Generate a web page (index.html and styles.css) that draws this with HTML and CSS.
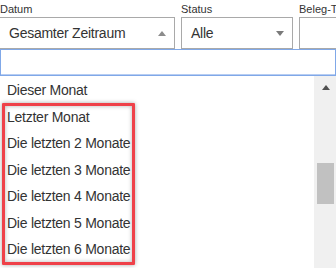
FILE: index.html
```html
<!DOCTYPE html>
<html lang="de">
<head>
<meta charset="utf-8">
<link rel="stylesheet" href="styles.css">
</head>
<body>
<div class="page">
  <div class="filters">
    <div class="field field-datum">
      <div class="label">Datum</div>
      <div class="select">
        <span class="value">Gesamter Zeitraum</span>
        <span class="arrow arrow-up"></span>
      </div>
    </div>
    <div class="field field-status">
      <div class="label">Status</div>
      <div class="select">
        <span class="value">Alle</span>
        <span class="arrow arrow-down"></span>
      </div>
    </div>
    <div class="field field-beleg">
      <div class="label">Beleg-Typ</div>
      <div class="select"></div>
    </div>
  </div>
  <div class="dropdown">
    <input class="search" type="text" aria-label="Suche">
    <div class="results">
      <ul class="options">
        <li>Dieser Monat</li>
        <li>Letzter Monat</li>
        <li>Die letzten 2 Monate</li>
        <li>Die letzten 3 Monate</li>
        <li>Die letzten 4 Monate</li>
        <li>Die letzten 5 Monate</li>
        <li>Die letzten 6 Monate</li>
      </ul>
      <div class="scrollbar">
        <span class="sb-arrow"></span>
        <span class="sb-thumb"></span>
      </div>
    </div>
  </div>
  <div class="highlight"></div>
</div>
</body>
</html>
```

FILE: styles.css
```css
html, body {
  margin: 0;
  padding: 0;
  background: #ffffff;
  overflow: hidden;
}
body {
  width: 336px;
  height: 268px;
  font-family: "Liberation Sans", Arial, sans-serif;
  color: #333333;
}
.page {
  position: relative;
  width: 336px;
  height: 268px;
  overflow: hidden;
}
.filters {
  display: flex;
  gap: 6px;
  margin-left: -1px;
  width: 360px;
}
.field {
  display: flex;
  flex-direction: column;
}
.field-datum { width: 176px; }
.field-status { width: 112px; }
.field-beleg { width: 60px; }
.label {
  height: 17px;
  font-size: 11px;
  line-height: 15px;
  padding-top: 2px;
  box-sizing: border-box;
  color: #333333;
}
.field-datum .label { padding-left: 1px; }
.select {
  box-sizing: border-box;
  height: 32px;
  border: 1px solid #a9a9a9;
  display: flex;
  align-items: center;
  justify-content: space-between;
  padding: 0 8px 0 9px;
}
.value {
  font-size: 14px;
  letter-spacing: -0.25px;
  color: #333333;
  line-height: 16px;
}
.arrow {
  width: 0;
  height: 0;
  border-left: 4px solid transparent;
  border-right: 4px solid transparent;
}
.arrow-up {
  border-bottom: 5px solid #8c8c8c;
}
.arrow-down {
  border-top: 5px solid #7a7a7a;
}
.dropdown {
  display: flex;
  flex-direction: column;
  height: 219px;
}
.search {
  display: block;
  box-sizing: border-box;
  width: 336px;
  height: 27px;
  margin: 0;
  border: 1px solid #80a8e8;
  box-shadow: inset 0 -1px 0 #b7cdf2;
  background: #ffffff;
  outline: none;
  padding: 0 6px;
  font-family: inherit;
  font-size: 14px;
}
.results {
  flex: 1;
  display: flex;
  min-height: 0;
}
.options {
  flex: 1;
  list-style: none;
  margin: 0;
  padding: 1px 0 0 0;
}
.options li {
  height: 26.5px;
  line-height: 26.5px;
  padding-left: 7px;
  font-size: 14px;
  letter-spacing: -0.25px;
  color: #333333;
  white-space: nowrap;
}
.scrollbar {
  width: 22px;
  background: #f0f0f0;
  display: flex;
  flex-direction: column;
  align-items: center;
  padding-left: 1px;
  box-sizing: border-box;
}
.sb-arrow {
  margin-top: 9px;
  width: 0;
  height: 0;
  border-left: 4.5px solid transparent;
  border-right: 4.5px solid transparent;
  border-bottom: 5px solid #505050;
}
.sb-thumb {
  margin-top: 73px;
  width: 17px;
  height: 41px;
  background: #c1c1c1;
}
.highlight {
  position: absolute;
  left: 2px;
  top: 103px;
  width: 133px;
  height: 162px;
  box-sizing: border-box;
  border: 3px solid #ef4149;
  box-shadow: 0 0 4px rgba(0, 0, 0, 0.35), inset 0 0 4px rgba(0, 0, 0, 0.3);
  border-radius: 1px;
}
```
